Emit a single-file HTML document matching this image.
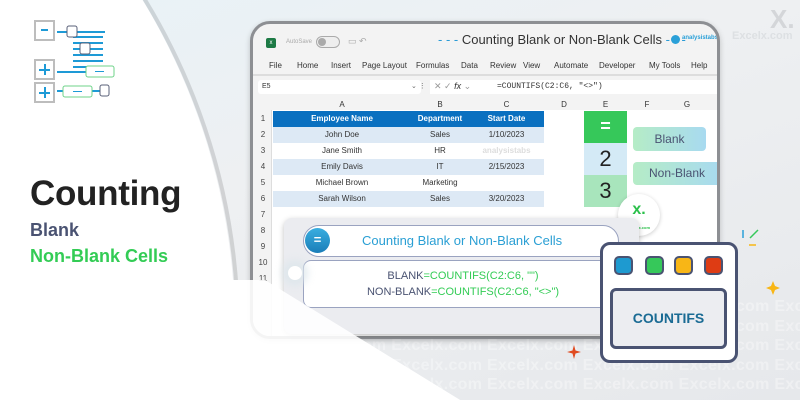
<!DOCTYPE html>
<html><head><meta charset="utf-8"><style>
*{margin:0;padding:0;box-sizing:border-box}
html,body{width:800px;height:400px;overflow:hidden}
body{font-family:"Liberation Sans",sans-serif}
#wrap{position:relative;width:800px;height:400px;overflow:hidden;background:linear-gradient(160deg,#e8f2f7 0%,#eef0f2 40%,#e6e8eb 100%)}
.abs{position:absolute}
.wm{position:absolute;left:8px;top:297px;width:792px;height:100px;overflow:hidden;color:rgba(255,255,255,0.35);font-weight:bold;font-size:16px;line-height:19.5px;white-space:nowrap;letter-spacing:0.3px}
.win{position:absolute;left:250px;top:21px;width:470px;height:318px;background:#f3f3f3;border:3px solid #8d8f93;border-radius:20px;overflow:hidden;box-shadow:0 2px 6px rgba(0,0,0,0.2)}
.t{position:absolute;font-size:8px;color:#333;white-space:nowrap}
.c{text-align:center}
.cell{position:absolute;font-size:8px;color:#333;text-align:center;height:16px;line-height:16px}
.rn{position:absolute;left:0;width:20px;text-align:center;font-size:8px;color:#444;height:16px;line-height:16px}
</style></head><body><div id="wrap">
<svg class="abs" style="left:0;top:0" width="800" height="400">
<circle cx="-398" cy="331" r="636" fill="none" stroke="rgba(0,0,0,0.12)" stroke-width="4"/>
<circle cx="-400" cy="330" r="635" fill="#fff"/>
<polygon points="265,280 460,400 0,400 0,280" fill="#fff"/>
</svg>
<div class="wm">Excelx.com Excelx.com Excelx.com Excelx.com Excelx.com Excelx.com Excelx.com Excelx.com Excelx.com<br>Excelx.com Excelx.com Excelx.com Excelx.com Excelx.com Excelx.com Excelx.com Excelx.com Excelx.com<br>Excelx.com Excelx.com Excelx.com Excelx.com Excelx.com Excelx.com Excelx.com Excelx.com Excelx.com<br>Excelx.com Excelx.com Excelx.com Excelx.com Excelx.com Excelx.com Excelx.com Excelx.com Excelx.com<br>Excelx.com Excelx.com Excelx.com Excelx.com Excelx.com Excelx.com Excelx.com Excelx.com Excelx.com</div>
<div class="abs" style="left:770px;top:4px;font-size:26px;font-weight:bold;color:#d4d6d9">X.</div>
<div class="abs" style="left:732px;top:30px;font-size:11px;font-weight:bold;color:#dde0e3">Excelx.com</div>

<svg class="abs" style="left:0;top:0" width="130" height="110">
<g fill="none" stroke="#bdbdbd" stroke-width="2"><rect x="35" y="21" width="19" height="19"/><rect x="35" y="60" width="19" height="19"/><rect x="35" y="83" width="19" height="19"/></g>
<g fill="#1e9ad6"><rect x="41" y="29" width="7" height="2"/><rect x="39" y="69" width="11" height="2"/><rect x="44" y="64" width="2" height="11"/><rect x="39" y="92" width="11" height="2"/><rect x="44" y="87" width="2" height="11"/>
<rect x="57" y="31" width="10" height="2"/><rect x="77" y="31" width="28" height="2"/><rect x="73" y="36" width="30" height="2"/><rect x="73" y="42" width="30" height="2"/><rect x="73" y="48" width="30" height="2"/><rect x="73" y="54" width="30" height="2"/><rect x="73" y="60" width="30" height="2"/><rect x="73" y="66" width="14" height="2"/><rect x="57" y="71" width="30" height="2"/><rect x="57" y="90" width="6" height="2"/><rect x="91" y="90" width="10" height="2"/></g>
<g fill="#fff" stroke="#5a6078" stroke-width="1"><rect x="67" y="26" width="10" height="11" rx="2"/><rect x="80" y="43" width="10" height="11" rx="2"/><rect x="100" y="85" width="9" height="11" rx="2"/></g>
<g fill="#fff" stroke="#6fd38a" stroke-width="1"><rect x="86" y="66" width="28" height="11" rx="2"/><rect x="63" y="86" width="29" height="11" rx="2"/></g>
<g fill="#1e9ad6"><rect x="95" y="71" width="9" height="1"/><rect x="73" y="91" width="9" height="1"/></g>
</svg>

<div class="abs" style="left:30px;top:174px;font-size:35px;font-weight:bold;color:#222;letter-spacing:-0.3px">Counting</div>
<div class="abs" style="left:30px;top:220px;font-size:18px;font-weight:bold;color:#4a5372">Blank</div>
<div class="abs" style="left:30px;top:246px;font-size:18px;font-weight:bold;color:#33cc55">Non-Blank Cells</div>

<div class="win">
 <div class="abs" style="left:13px;top:14px;width:10px;height:10px;background:#1d7a45;border-radius:2px;color:#fff;font-size:6px;text-align:center;line-height:10px">x</div>
 <div class="t" style="left:33px;top:15px;color:#aaa;font-size:6px">AutoSave</div>
 <div class="abs" style="left:63px;top:12px;width:24px;height:12px;border:1px solid #aaa;border-radius:6px;background:#eee"><div style="width:8px;height:8px;margin:1px;border-radius:50%;background:#aaa"></div></div>
 <div class="t" style="left:95px;top:12px;color:#aaa;font-size:9px">▭ ↶</div>
 <div class="t" style="left:185px;top:8px;font-size:13px;color:#333"><span style="color:#2a9bd6">- - - </span>Counting Blank or Non-Blank Cells<span style="color:#2a9bd6"> - - -</span></div>
 <div class="abs" style="left:418px;top:11px;width:9px;height:9px;border-radius:50%;background:#2aa0d8"></div>
 <div class="t" style="left:429px;top:11px;font-size:6px;color:#2aa0d8;font-weight:bold">analysistabs</div>
 <div class="t" style="left:16px;top:37px">File</div><div class="t" style="left:44px;top:37px">Home</div><div class="t" style="left:78px;top:37px">Insert</div><div class="t" style="left:109px;top:37px">Page Layout</div><div class="t" style="left:163px;top:37px">Formulas</div><div class="t" style="left:208px;top:37px">Data</div><div class="t" style="left:237px;top:37px">Review</div><div class="t" style="left:270px;top:37px">View</div><div class="t" style="left:301px;top:37px">Automate</div><div class="t" style="left:346px;top:37px">Developer</div><div class="t" style="left:396px;top:37px">My Tools</div><div class="t" style="left:438px;top:37px">Help</div>
 <div class="abs" style="left:0;top:50px;width:470px;height:2px;background:#ddd"></div>
 <div class="abs" style="left:5px;top:56px;width:163px;height:14px;background:#fff;border-radius:3px"></div>
 <div class="t" style="left:9px;top:59px;font-size:7px">E5</div>
 <div class="t" style="left:158px;top:58px;font-size:7px;color:#666">⌄ ⋮</div>
 <div class="abs" style="left:177px;top:56px;width:290px;height:14px;background:#fff"></div>
 <div class="t" style="left:181px;top:57px;font-size:9px;color:#999">✕ ✓ <i style="color:#333">fx</i> ⌄</div>
 <div class="t" style="left:244px;top:58px;font-family:'Liberation Mono',monospace;font-size:8px">=COUNTIFS(C2:C6, "&lt;&gt;")</div>
 <div class="abs" style="left:0;top:74px;width:470px;height:240px;background:#fff"></div>
 <div class="abs" style="left:0;top:74px;width:470px;height:12px;background:#f3f3f3"></div>
 <div class="t c" style="left:20px;top:76px;width:138px">A</div><div class="t c" style="left:158px;top:76px;width:58px">B</div><div class="t c" style="left:216px;top:76px;width:75px">C</div><div class="t c" style="left:291px;top:76px;width:40px">D</div><div class="t c" style="left:331px;top:76px;width:43px">E</div><div class="t c" style="left:374px;top:76px;width:40px">F</div><div class="t c" style="left:414px;top:76px;width:40px">G</div>
 <div class="abs" style="left:0;top:86px;width:19px;height:226px;background:#f3f3f3;border-right:1px solid #ddd"></div>
 <div class="rn" style="top:87px">1</div><div class="rn" style="top:103px">2</div><div class="rn" style="top:119px">3</div><div class="rn" style="top:135px">4</div><div class="rn" style="top:151px">5</div><div class="rn" style="top:167px">6</div><div class="rn" style="top:183px">7</div><div class="rn" style="top:199px">8</div><div class="rn" style="top:215px">9</div><div class="rn" style="top:231px">10</div><div class="rn" style="top:247px">11</div>
 <div class="abs" style="left:20px;top:87px;width:271px;height:16px;background:#0a70c0"></div>
 <div class="abs" style="left:20px;top:103px;width:271px;height:16px;background:#dde9f5"></div>
 <div class="abs" style="left:20px;top:135px;width:271px;height:16px;background:#dde9f5"></div>
 <div class="abs" style="left:20px;top:167px;width:271px;height:16px;background:#dde9f5"></div>
 <div class="cell" style="left:20px;top:87px;width:138px;color:#fff;font-weight:bold">Employee Name</div><div class="cell" style="left:158px;top:87px;width:58px;color:#fff;font-weight:bold">Department</div><div class="cell" style="left:216px;top:87px;width:75px;color:#fff;font-weight:bold">Start Date</div>
 <div class="cell" style="left:20px;top:103px;width:138px">John Doe</div><div class="cell" style="left:158px;top:103px;width:58px">Sales</div><div class="cell" style="left:216px;top:103px;width:75px">1/10/2023</div>
 <div class="cell" style="left:20px;top:119px;width:138px">Jane Smith</div><div class="cell" style="left:158px;top:119px;width:58px">HR</div><div class="cell" style="left:216px;top:119px;width:75px;color:#ddd;font-weight:bold">analysistabs</div>
 <div class="cell" style="left:20px;top:135px;width:138px">Emily Davis</div><div class="cell" style="left:158px;top:135px;width:58px">IT</div><div class="cell" style="left:216px;top:135px;width:75px">2/15/2023</div>
 <div class="cell" style="left:20px;top:151px;width:138px">Michael Brown</div><div class="cell" style="left:158px;top:151px;width:58px">Marketing</div>
 <div class="cell" style="left:20px;top:167px;width:138px">Sarah Wilson</div><div class="cell" style="left:158px;top:167px;width:58px">Sales</div><div class="cell" style="left:216px;top:167px;width:75px">3/20/2023</div>
 <div class="abs" style="left:331px;top:87px;width:43px;height:32px;background:#36c85a;color:#fff;font-size:18px;font-weight:bold;text-align:center;line-height:30px">=</div>
 <div class="abs" style="left:331px;top:119px;width:43px;height:32px;background:#d4eaf6;color:#222;font-size:22px;text-align:center;line-height:32px">2</div>
 <div class="abs" style="left:331px;top:151px;width:43px;height:32px;background:#a8e5bc;color:#222;font-size:22px;text-align:center;line-height:32px">3</div>
 <div class="abs" style="left:380px;top:103px;width:73px;height:24px;border-radius:4px;background:linear-gradient(90deg,#b5ecc6,#a8daf0);color:#4a5372;font-size:12px;text-align:center;line-height:24px">Blank</div>
 <div class="abs" style="left:380px;top:138px;width:88px;height:23px;border-radius:4px;background:linear-gradient(90deg,#b5ecc6,#a8daf0);color:#4a5372;font-size:12px;text-align:center;line-height:23px">Non-Blank</div>
</div>

<div class="abs" style="left:618px;top:194px;width:42px;height:42px;border-radius:50%;background:#fff;box-shadow:0 1px 4px rgba(0,0,0,0.2);text-align:center;color:#2ac04a;font-weight:bold;font-size:16px;line-height:32px">x.<div style="font-size:4px;line-height:4px;color:#2ac04a">Excelx.com</div></div>

<div class="abs" style="left:284px;top:218px;width:355px;height:116px;background:#ebecf0;border-radius:8px;box-shadow:0 2px 6px rgba(0,0,0,0.25)"></div>
<div class="abs" style="left:303px;top:225px;width:316px;height:32px;background:#fff;border:1px solid #9aa3c0;border-radius:16px;color:#2a9fd4;font-size:13px;line-height:30px;padding-left:58px">Counting Blank or Non-Blank Cells</div>
<div class="abs" style="left:305px;top:228px;width:25px;height:25px;border-radius:50%;background:linear-gradient(#3aaee0,#1a7db8);color:#fff;text-align:center;line-height:24px;font-size:13px;font-weight:bold">=</div>
<div class="abs" style="left:303px;top:260px;width:320px;height:48px;background:#fff;border:1px solid #9aa3c0;border-radius:8px;text-align:center;font-size:11px;line-height:16px;padding-top:7px;color:#4a5372">BLANK<span style="color:#33cc55">=COUNTIFS(C2:C6, "")</span><br>NON-BLANK<span style="color:#33cc55">=COUNTIFS(C2:C6, "&lt;&gt;")</span></div>
<div class="abs" style="left:288px;top:266px;width:14px;height:14px;border-radius:50%;background:#fff;box-shadow:0 0 8px 6px rgba(220,230,235,0.8)"></div>

<svg class="abs" style="left:0;top:280px" width="470" height="120"><polygon points="265,0 460,120 0,120 0,0" fill="#fff" opacity="0.9"/></svg>

<div class="abs" style="left:600px;top:242px;width:138px;height:121px;background:#fff;border:3px solid #4a5372;border-radius:10px"></div>
<div class="abs" style="left:614px;top:256px;width:19px;height:19px;background:#1e9ad0;border:2px solid #4a5372;border-radius:5px"></div>
<div class="abs" style="left:645px;top:256px;width:19px;height:19px;background:#36c85a;border:2px solid #4a5372;border-radius:5px"></div>
<div class="abs" style="left:674px;top:256px;width:19px;height:19px;background:#f8b616;border:2px solid #4a5372;border-radius:5px"></div>
<div class="abs" style="left:704px;top:256px;width:19px;height:19px;background:#de3c14;border:2px solid #4a5372;border-radius:5px"></div>
<div class="abs" style="left:610px;top:288px;width:117px;height:61px;background:#ecedf1;border:3px solid #4a5372;border-radius:6px;color:#1a6b94;font-weight:bold;font-size:14px;text-align:center;line-height:55px">COUNTIFS</div>

<svg class="abs" style="left:740px;top:225px" width="50" height="80">
<path d="M3 5v8" stroke="#2aa0d8" stroke-width="1.5"/><path d="M10 13l8-8" stroke="#36c85a" stroke-width="1.5"/><path d="M9 20h7" stroke="#f8b616" stroke-width="1.5"/>
<path d="M33 56l2 5 5 2-5 2-2 5-2-5-5-2 5-2z" fill="#f8b616"/></svg>
<svg class="abs" style="left:566px;top:344px" width="16" height="16"><path d="M8 1l1.5 5.5 5.5 1.5-5.5 1.5-1.5 5.5-1.5-5.5-5.5-1.5 5.5-1.5z" fill="#e04a20"/></svg>
</div></body></html>
